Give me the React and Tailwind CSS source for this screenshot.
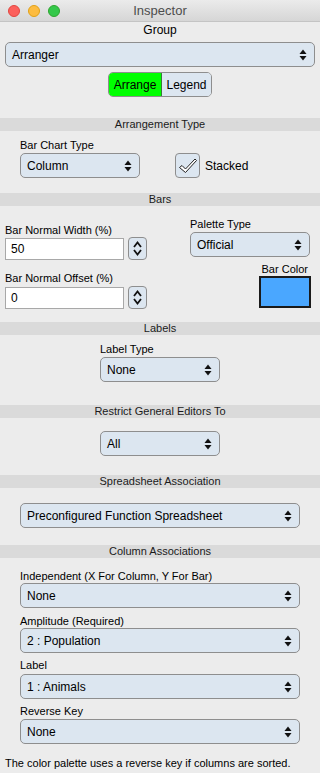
import React from "react";

const Arrows = () => (
  <svg width="8" height="12" viewBox="0 0 8 12" className="shrink-0">
    <path d="M0.5 5 L4 0.5 L7.5 5 Z" fill="#111" />
    <path d="M0.5 7 L7.5 7 L4 11.5 Z" fill="#111" />
  </svg>
);

function Select({ value, className = "" }) {
  return (
    <div
      className={`flex h-[25px] items-center justify-between rounded-[5px] border border-[#8e8e8e] bg-[#dce6f0] pl-[6px] pr-[7px] text-[12px] text-black ${className}`}
    >
      <span>{value}</span>
      <Arrows />
    </div>
  );
}

function Header({ children, className = "" }) {
  return (
    <div
      className={`flex h-[13px] items-center justify-center bg-[#dadada] text-[11px] leading-[13px] text-[#1a1a1a] ${className}`}
    >
      {children}
    </div>
  );
}

function Label({ children, className = "" }) {
  return <div className={`text-[11px] leading-[14px] text-black ${className}`}>{children}</div>;
}

function Stepper() {
  return (
    <div className="ml-[4px] flex h-[23px] w-[19px] items-center justify-center rounded-[4px] border border-[#8e8e8e] bg-[#dce6f0]">
      <svg width="11" height="17" viewBox="0 0 11 17">
        <path d="M2 7 L5.5 2.5 L9 7" fill="none" stroke="#111" strokeWidth="1.8" />
        <path d="M2 10 L5.5 14.5 L9 10" fill="none" stroke="#111" strokeWidth="1.8" />
      </svg>
    </div>
  );
}

function TextInput({ value }) {
  return (
    <div className="flex h-[22px] w-[119px] items-center border border-[#a8a8a8] bg-white pl-[5px] text-[12px] text-black">
      {value}
    </div>
  );
}

export default function App() {
  return (
    <div
      className="h-[773px] w-[320px] overflow-hidden bg-[#ececec]"
      style={{ fontFamily: '"Liberation Sans", Arial, sans-serif' }}
    >
      {/* Title bar */}
      <div className="relative flex h-[22px] items-center justify-center border-b border-[#c4c4c4] bg-gradient-to-b from-[#ebebeb] to-[#d6d6d6]">
        <div className="absolute left-[8px] top-[5px] flex gap-[8px]">
          <div className="h-[12px] w-[12px] rounded-full border border-[#e2463f] bg-[#fc605c]" />
          <div className="h-[12px] w-[12px] rounded-full border border-[#e1a116] bg-[#fdbc40]" />
          <div className="h-[12px] w-[12px] rounded-full border border-[#2ea52e] bg-[#34c84a]" />
        </div>
        <span className="text-[13px] text-[#4d4d4d]">Inspector</span>
      </div>

      <div className="mt-[1px] text-center text-[12px] leading-[14px] text-black">Group</div>
      <div className="mt-[5px] px-[5px]">
        <Select value="Arranger" />
      </div>
      <div className="mt-[5px] flex justify-center">
        <div className="flex h-[25px] overflow-hidden rounded-[5px] border border-[#8e8e8e] text-[12px] text-black">
          <div className="flex w-[53px] items-center justify-center border-r border-[#3a7a3a] bg-[#00ff00]">Arrange</div>
          <div className="flex w-[49px] items-center justify-center bg-[#dce6f0]">Legend</div>
        </div>
      </div>

      <Header className="mt-[21px]">Arrangement Type</Header>
      <div className="mt-[7px] flex px-[20px]">
        <div className="w-[120px]">
          <Label>Bar Chart Type</Label>
          <Select value="Column" className="mt-[1px]" />
        </div>
        <div className="ml-[35px] mt-[15px] flex items-center">
          <div className="flex h-[25px] w-[25px] items-center justify-center rounded-[4px] border border-[#8e8e8e] bg-[#dce6f0]">
            <svg width="20" height="18" viewBox="0 0 20 18">
              <path
                d="M1.5 10.5 L4 8.5 L7.5 12 L17 2 L18.5 3.5 L7.5 15.5 Z"
                fill="#fff"
                stroke="#222"
                strokeWidth="1"
                strokeLinejoin="round"
              />
            </svg>
          </div>
          <span className="ml-[5px] text-[12px] text-black">Stacked</span>
        </div>
      </div>

      <Header className="mt-[15px]">Bars</Header>
      <div className="flex pl-[5px] pr-[9px]">
        <div className="mt-[17px]">
          <Label>Bar Normal Width (%)</Label>
          <div className="flex items-center">
            <TextInput value="50" />
            <Stepper />
          </div>
          <Label className="mt-[11px]">Bar Normal Offset (%)</Label>
          <div className="mt-[1px] flex items-center">
            <TextInput value="0" />
            <Stepper />
          </div>
        </div>
        <div className="ml-auto mt-[11px] flex w-[121px] flex-col items-end">
          <div className="w-[120px] self-start">
            <Label>Palette Type</Label>
            <Select value="Official" className="mt-[1px]" />
          </div>
          <Label className="mt-[5px] pr-[3px]">Bar Color</Label>
          <div className="h-[32px] w-[52px] border-[2px] border-[#1a1a1a] bg-[#4aa7ff]" />
        </div>
      </div>

      <Header className="mt-[13px]">Labels</Header>
      <Label className="ml-[100px] mt-[7px] w-[120px]">Label Type</Label>
      <Select value="None" className="ml-[100px] mt-[1px] w-[120px]" />

      <Header className="mt-[23px]">Restrict General Editors To</Header>
      <Select value="All" className="ml-[100px] mt-[13px] w-[120px]" />

      <Header className="mt-[19px]">Spreadsheet Association</Header>
      <div className="mt-[15px] px-[20px]">
        <Select value="Preconfigured Function Spreadsheet" />
      </div>

      <Header className="mt-[17px]">Column Associations</Header>
      <div className="mt-[11px] px-[20px]">
        <Label>Independent (X For Column, Y For Bar)</Label>
        <Select value="None" />
        <Label className="mt-[6px]">Amplitude (Required)</Label>
        <Select value="2 : Population" />
        <Label className="mt-[5px]">Label</Label>
        <Select value="1 : Animals" className="mt-[2px]" />
        <Label className="mt-[5px]">Reverse Key</Label>
        <Select value="None" className="mt-[1px]" />
      </div>
      <div className="mt-[12px] px-[5px] text-[11px] leading-[14px] text-black">
        The color palette uses a reverse key if columns are sorted.
      </div>
    </div>
  );
}
